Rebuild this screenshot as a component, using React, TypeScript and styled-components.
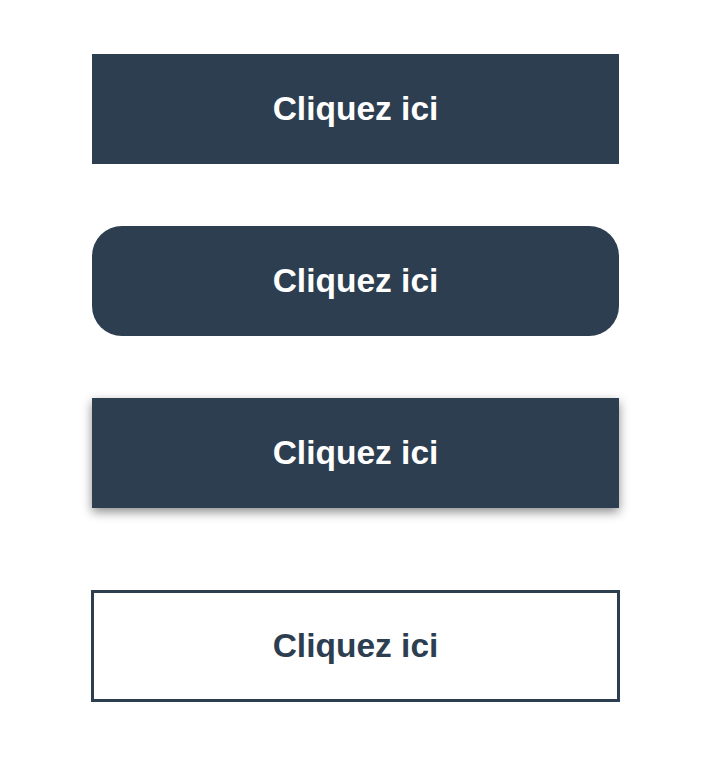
import React from "react";
import styled, { createGlobalStyle, css } from "styled-components";

const Global = createGlobalStyle`
  html, body { margin: 0; padding: 0; background: #ffffff; }
  body { font-family: "Liberation Sans", Arial, sans-serif; }
`;

const Page = styled.div`
  display: flex;
  flex-direction: column;
  align-items: flex-start;
  padding: 54px 0 0 92px;
`;

type Variant = "flat" | "rounded" | "raised" | "outline";

const Button = styled.button<{ $variant: Variant }>`
  box-sizing: border-box;
  width: 527px;
  height: 110px;
  margin: 0 0 62px 0;
  border: none;
  background: #2c3e50;
  color: #ffffff;
  font-family: "Liberation Sans", Arial, sans-serif;
  font-weight: 700;
  font-size: 33.5px;
  display: flex;
  align-items: center;
  justify-content: center;
  padding: 0;
  cursor: pointer;

  ${(p) =>
    p.$variant === "rounded" &&
    css`
      border-radius: 30px;
    `}
  ${(p) =>
    p.$variant === "raised" &&
    css`
      box-shadow: 0 4px 10px rgba(0, 0, 0, 0.45);
      margin-bottom: 82px;
    `}
  ${(p) =>
    p.$variant === "outline" &&
    css`
      width: 529px;
      height: 112px;
      margin-left: -1px;
      background: #ffffff;
      color: #2c3e50;
      border: 3px solid #2c3e50;
    `}
`;

export default function App() {
  return (
    <>
      <Global />
      <Page>
        <Button $variant="flat">Cliquez ici</Button>
        <Button $variant="rounded">Cliquez ici</Button>
        <Button $variant="raised">Cliquez ici</Button>
        <Button $variant="outline">Cliquez ici</Button>
      </Page>
    </>
  );
}
